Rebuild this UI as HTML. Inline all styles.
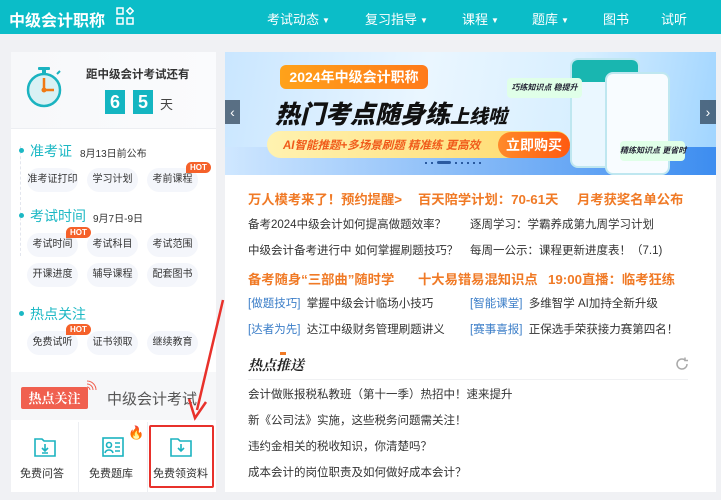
<!DOCTYPE html>
<html><head><meta charset="utf-8"><style>
*{margin:0;padding:0;box-sizing:border-box}
body{width:721px;height:500px;overflow:hidden;background:#f0f1f4;font-family:"Liberation Sans","Noto Sans CJK SC",sans-serif;position:relative;color:#333}
.a{position:absolute;white-space:nowrap}
.hd{position:absolute;left:0;top:0;width:721px;height:34px;background:#0bbdc8}
.nav{color:#fff;font-size:13px;top:9px}
.nav i{font-style:normal;font-size:8px;margin-left:3px;vertical-align:1px}
.lp{position:absolute;left:11px;top:52px;width:205px;height:440px;background:#fff}
.sec{color:#1cb8c4;font-size:14px}
.dot{position:absolute;width:5px;height:5px;border-radius:50%;background:#1cb8c4}
.pill{position:absolute;height:24px;width:51px;border-radius:12px;background:#f4f6fb;font-size:10px;color:#333;text-align:center;line-height:24px}
.hot{position:absolute;background:#f5612a;color:#fff;font-size:8px;font-weight:bold;height:11px;line-height:11px;padding:0 4px;border-radius:6px 6px 6px 0}
.rp{position:absolute;left:225px;top:52px;width:491px;height:440px;background:#fff}
.or{color:#f07a26;font-size:13.3px;font-weight:bold}
.t{font-size:11.5px;color:#333}
.bl{color:#3b7ec8}
</style></head><body>
<div class="hd"></div>
<div class="a" style="left:9px;top:7px;color:#fff;font-size:16px;font-weight:bold">中级会计职称</div>
<svg class="a" style="left:116px;top:7px" width="18" height="18" viewBox="0 0 18 18" fill="none" stroke="#fff" stroke-width="1.5"><rect x="1" y="1" width="6" height="6"/><rect x="1" y="11" width="6" height="6"/><rect x="11" y="11" width="6" height="6"/><path d="M14 0.8L17.2 4 14 7.2 10.8 4Z"/></svg>
<div class="a nav" style="left:267px">考试动态<i>▼</i></div>
<div class="a nav" style="left:365px">复习指导<i>▼</i></div>
<div class="a nav" style="left:462px">课程<i>▼</i></div>
<div class="a nav" style="left:532px">题库<i>▼</i></div>
<div class="a nav" style="left:603px">图书</div>
<div class="a nav" style="left:661px">试听</div>

<div class="lp"></div>
<div class="a" style="left:11px;top:52px;width:205px;height:77px;background:linear-gradient(90deg,#f7f8fa,#fafbfd);border-bottom:1px solid #eceef2"></div>
<svg class="a" style="left:24px;top:64px" width="42" height="46" viewBox="0 0 42 46"><circle cx="20" cy="26" r="16" fill="#d9f1f4"/><circle cx="20" cy="26" r="16" fill="none" stroke="#1bb3c0" stroke-width="2.5"/><rect x="18" y="5" width="4" height="5" fill="#1bb3c0"/><rect x="14" y="3" width="12" height="3" rx="1" fill="#1bb3c0"/><path d="M33 10l3-3" stroke="#1bb3c0" stroke-width="2"/><path d="M20 14v12h10" stroke="#f07a14" stroke-width="2.5" fill="none"/><circle cx="20" cy="26" r="2.5" fill="#f07a14"/></svg>
<div class="a" style="left:86px;top:66px;font-size:11.5px;font-weight:bold;color:#333">距中级会计考试还有</div>
<div class="a" style="left:105px;top:90px;width:20px;height:24px;background:#14b5c1;color:#fff;font-size:18px;font-weight:bold;text-align:center;line-height:24px">6</div>
<div class="a" style="left:133px;top:90px;width:20px;height:24px;background:#14b5c1;color:#fff;font-size:18px;font-weight:bold;text-align:center;line-height:24px">5</div>
<div class="a" style="left:160px;top:94px;font-size:13px;color:#444">天</div>
<div class="a" style="left:20px;top:146px;height:110px;border-left:1px dashed #e3e6ee"></div>

<div class="dot" style="left:19px;top:148px"></div>
<div class="a sec" style="left:30px;top:141px">准考证</div>
<div class="a" style="left:80px;top:145px;font-size:10px">8月13日前公布</div>
<div class="pill" style="left:27px;top:168px">准考证打印</div>
<div class="pill" style="left:87px;top:168px">学习计划</div>
<div class="pill" style="left:147px;top:168px">考前课程</div>
<div class="hot" style="left:186px;top:162px">HOT</div>

<div class="dot" style="left:19px;top:213px"></div>
<div class="a sec" style="left:30px;top:206px">考试时间</div>
<div class="a" style="left:93px;top:210px;font-size:10px">9月7日-9日</div>
<div class="pill" style="left:27px;top:233px">考试时间</div>
<div class="pill" style="left:87px;top:233px">考试科目</div>
<div class="pill" style="left:147px;top:233px">考试范围</div>
<div class="hot" style="left:66px;top:227px">HOT</div>
<div class="pill" style="left:27px;top:263px">开课进度</div>
<div class="pill" style="left:87px;top:263px">辅导课程</div>
<div class="pill" style="left:147px;top:263px">配套图书</div>

<div class="dot" style="left:19px;top:311px"></div>
<div class="a sec" style="left:30px;top:304px">热点关注</div>
<div class="pill" style="left:27px;top:331px">免费试听</div>
<div class="pill" style="left:87px;top:331px">证书领取</div>
<div class="pill" style="left:147px;top:331px">继续教育</div>
<div class="hot" style="left:66px;top:324px">HOT</div>

<div class="a" style="left:11px;top:372px;width:205px;height:48px;background:#f6f7f9"></div>
<div class="a" style="left:21px;top:387px;width:67px;height:22px;background:#f0604f;color:#fff;font-size:13px;font-weight:bold;text-align:center;line-height:22px;border-radius:2px;font-family:'Noto Serif CJK SC',serif">热点关注</div>
<svg class="a" style="left:85px;top:380px" width="12" height="12" viewBox="0 0 12 12" fill="none" stroke="#f0604f" stroke-width="1"><path d="M2 7a3 3 0 0 1 3 3M2 4a6 6 0 0 1 6 6M2 1a9 9 0 0 1 9 9"/></svg>
<div class="a" style="left:107px;top:388px;font-size:15px;color:#555">中级会计考试</div>
<div class="a" style="left:78px;top:422px;height:70px;border-left:1px solid #eceef2"></div>
<div class="a" style="left:147px;top:422px;height:70px;border-left:1px solid #eceef2"></div>
<svg class="a" style="left:34px;top:437px" width="22" height="20" viewBox="0 0 22 20" fill="none" stroke="#1bb3c0" stroke-width="1.6"><path d="M1 2h7l2 2h11v15H1Z"/><path d="M11 7v7M8 11l3 3 3-3M8 16h6"/></svg>
<div class="a" style="left:20px;top:465px;font-size:11px">免费问答</div>
<svg class="a" style="left:102px;top:437px" width="22" height="20" viewBox="0 0 22 20" fill="none" stroke="#1bb3c0" stroke-width="1.6"><rect x="1" y="1" width="20" height="18"/><circle cx="7" cy="8" r="2.5"/><path d="M3 16c1-4 7-4 8 0M13 6h5M13 10h5M13 14h5"/></svg>
<div class="a" style="left:128px;top:425px;font-size:13px">🔥</div>
<div class="a" style="left:89px;top:465px;font-size:11px">免费题库</div>
<svg class="a" style="left:170px;top:437px" width="22" height="20" viewBox="0 0 22 20" fill="none" stroke="#1bb3c0" stroke-width="1.6"><path d="M1 2h7l2 2h11v15H1Z"/><path d="M11 7v7M8 11l3 3 3-3"/></svg>
<div class="a" style="left:153px;top:465px;font-size:11px">免费领资料</div>
<div class="a" style="left:149px;top:425px;width:65px;height:63px;border:2px solid #e8312b;border-radius:2px"></div>
<svg class="a" style="left:185px;top:295px" width="45" height="130" viewBox="0 0 45 130"><path d="M38 5L12 115" stroke="#e8312b" stroke-width="2.5"/><path d="M4 104l6 19 11-16" stroke="#e8312b" stroke-width="2.5" fill="none"/></svg>

<div class="rp"></div>
<div class="a" style="left:225px;top:52px;width:491px;height:123px;background:linear-gradient(100deg,#c9e6ff 0%,#eaf6ff 40%,#d8efff 70%,#9fd4ff 100%);overflow:hidden">
 <div class="a" style="left:0;top:95px;width:491px;height:28px;background:linear-gradient(90deg,#cfe7ff,#3d8df0)"></div>
 <div class="a" style="left:55px;top:13px;width:148px;height:24px;background:linear-gradient(90deg,#ffa21a,#ff7a1a);border-radius:6px;color:#fff;font-size:14px;font-weight:bold;text-align:center;line-height:24px">2024年中级会计职称</div>
 <div class="a" style="left:50px;top:43px;font-size:25px;font-weight:900;color:#111;font-style:italic">热门考点随身练<span style="font-size:19px">上线啦</span></div>
 <div class="a" style="left:42px;top:79px;width:303px;height:27px;background:linear-gradient(90deg,#fff2b0,#ffd96a);border-radius:14px"></div>
 <div class="a" style="left:58px;top:85px;font-size:11.5px;font-weight:bold;color:#f05a1a;font-style:italic">AI智能推题+多场景刷题 精准练 更高效</div>
 <div class="a" style="left:273px;top:80px;width:72px;height:26px;background:linear-gradient(90deg,#ff8a2a,#ff5a10);border-radius:13px;color:#fff;font-size:14px;font-weight:bold;text-align:center;line-height:26px">立即购买</div>
 <div class="a" style="left:345px;top:6px;width:70px;height:110px;background:#eaf7ff;border:2px solid #bfe7f0;border-radius:8px"><div style="height:22px;background:#19b6b0;border-radius:6px 6px 0 0"></div></div>
 <div class="a" style="left:380px;top:20px;width:65px;height:103px;background:#f8fcff;border:2px solid #bfe7f0;border-radius:8px"></div>
 <div class="a" style="left:282px;top:26px;width:75px;height:20px;background:#e0ffe8;border-radius:4px;font-size:8px;font-weight:bold;font-style:italic;line-height:20px;text-align:center;color:#223">巧练知识点 稳提升</div>
 <div class="a" style="left:395px;top:89px;width:65px;height:20px;background:#e0ffe8;border-radius:4px;font-size:8px;font-weight:bold;font-style:italic;line-height:20px;text-align:center;color:#223">精练知识点 更省时</div>
 <div class="a" style="left:0;top:48px;width:15px;height:24px;background:rgba(40,60,80,.7);color:#fff;font-size:14px;text-align:center;line-height:24px">‹</div>
 <div class="a" style="left:475px;top:48px;width:16px;height:24px;background:rgba(40,60,80,.7);color:#fff;font-size:14px;text-align:center;line-height:24px">›</div>
 <div class="a" style="left:200px;top:109px;width:85px;height:3px;display:flex;gap:4px;align-items:center"><i style="width:2px;height:2px;background:#2a5aa0"></i><i style="width:2px;height:2px;background:#2a5aa0"></i><i style="width:14px;height:3px;background:#2a5aa0;border-radius:2px"></i><i style="width:2px;height:2px;background:#2a5aa0"></i><i style="width:2px;height:2px;background:#2a5aa0"></i><i style="width:2px;height:2px;background:#2a5aa0"></i><i style="width:2px;height:2px;background:#2a5aa0"></i><i style="width:2px;height:2px;background:#2a5aa0"></i></div>
</div>

<div class="a or" style="left:248px;top:189px">万人模考来了！预约提醒&gt;</div>
<div class="a or" style="left:418px;top:189px">百天陪学计划：70-61天</div>
<div class="a or" style="left:577px;top:189px">月考获奖名单公布</div>
<div class="a t" style="left:248px;top:216px">备考2024中级会计如何提高做题效率？</div>
<div class="a t" style="left:470px;top:216px">逐周学习：学霸养成第九周学习计划</div>
<div class="a t" style="left:248px;top:242px">中级会计备考进行中 如何掌握刷题技巧？</div>
<div class="a t" style="left:470px;top:242px">每周一公示：课程更新进度表！（7.1)</div>
<div class="a or" style="left:248px;top:269px">备考随身“三部曲”随时学</div>
<div class="a or" style="left:418px;top:269px">十大易错易混知识点</div>
<div class="a or" style="left:548px;top:269px">19:00直播：临考狂练</div>
<div class="a t" style="left:248px;top:295px"><span class="bl">[做题技巧]</span>&nbsp; 掌握中级会计临场小技巧</div>
<div class="a t" style="left:470px;top:295px"><span class="bl">[智能课堂]</span>&nbsp; 多维智学 AI加持全新升级</div>
<div class="a t" style="left:248px;top:321px"><span class="bl">[达者为先]</span>&nbsp; 达江中级财务管理刷题讲义</div>
<div class="a t" style="left:470px;top:321px"><span class="bl">[赛事喜报]</span>&nbsp; 正保选手荣获接力赛第四名！</div>

<div class="a" style="left:248px;top:355px;font-size:14px;font-weight:bold;font-style:italic;color:#222;font-family:'Noto Serif CJK SC',serif">热点推送</div>
<div class="a" style="left:280px;top:352px;width:6px;height:3px;background:#f07a26"></div>
<svg class="a" style="left:675px;top:357px" width="14" height="14" viewBox="0 0 14 14" fill="none" stroke="#aaa" stroke-width="1.5"><path d="M12 7a5 5 0 1 1-2-4"/><path d="M10 0.5v3h3"/></svg>
<div class="a" style="left:248px;top:379px;width:440px;border-top:1px solid #f0f1f3"></div>
<div class="a t" style="left:248px;top:386px">会计做账报税私教班（第十一季）热招中！速来提升</div>
<div class="a t" style="left:248px;top:412px">新《公司法》实施，这些税务问题需关注！</div>
<div class="a t" style="left:248px;top:438px">违约金相关的税收知识，你清楚吗？</div>
<div class="a t" style="left:248px;top:464px">成本会计的岗位职责及如何做好成本会计？</div>
</body></html>
